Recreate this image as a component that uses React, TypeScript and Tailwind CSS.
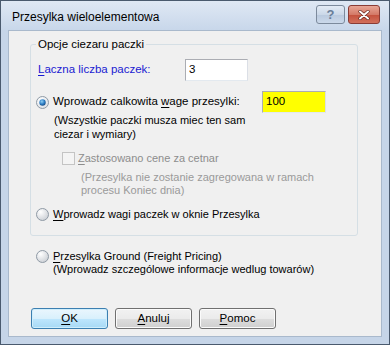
import React from 'react';

const font = "font-['Liberation_Sans',Arial,sans-serif]";

const Radio: React.FC<{ checked?: boolean }> = ({ checked }) => (
  <svg width="13" height="13" viewBox="0 0 13 13" className="shrink-0">
    <defs>
      <radialGradient id={checked ? 'rgOn' : 'rgOff'} cx="0.35" cy="0.3" r="0.8">
        <stop offset="0" stopColor="#ffffff" />
        <stop offset="1" stopColor={checked ? '#d9dee4' : '#c8ccd2'} />
      </radialGradient>
      <radialGradient id="dot" cx="0.4" cy="0.35" r="0.7">
        <stop offset="0" stopColor="#8fd0f5" />
        <stop offset="0.6" stopColor="#2a7bc2" />
        <stop offset="1" stopColor="#15467d" />
      </radialGradient>
    </defs>
    <circle cx="6.5" cy="6.5" r="6" fill={`url(#${checked ? 'rgOn' : 'rgOff'})`} stroke="#8f9aa5" strokeWidth="1" />
    {checked && <circle cx="6.5" cy="6.5" r="3.2" fill="url(#dot)" />}
  </svg>
);

const Checkbox: React.FC = () => (
  <span className="w-[13px] h-[13px] shrink-0 border border-[#c4c4c4] bg-[#f4f4f4]" />
);

const Button: React.FC<{ children: React.ReactNode; primary?: boolean }> = ({ children, primary }) => (
  <button
    className={`w-[77px] h-[21px] rounded-[3px] border text-[11.5px] leading-none text-black ${
      primary
        ? 'border-[#3c7fb1] bg-[linear-gradient(to_bottom,#eaf6fd_0%,#d9f0fc_50%,#bee6fd_51%,#a7d9f5_100%)] shadow-[inset_0_0_0_1px_#cfeefc]'
        : 'border-[#707070] bg-[linear-gradient(to_bottom,#f2f2f2_0%,#ebebeb_50%,#dddddd_51%,#cfcfcf_100%)] shadow-[inset_0_0_0_1px_#fbfbfb]'
    }`}
  >
    {children}
  </button>
);

export default function App() {
  return (
    <div className={`w-[390px] h-[345px] flex flex-col border border-[#4a5a6e] bg-[#c6d5e8] ${font} text-[11px] text-black overflow-hidden`}>
      {/* title bar */}
      <div className="h-[29px] flex items-center pl-[11px] pr-[9px] bg-[linear-gradient(to_bottom,#dfe8f4,#c8d7ea)]">
        <span className="flex-1 text-[12px] text-black pt-[2px]">Przesylka wieloelementowa</span>
        <div className="flex items-start gap-[3px] self-start mt-[4px]">
          <div className="w-[29px] h-[19px] rounded-[3px] border border-[#7c8a9c] bg-[linear-gradient(to_bottom,#e3ebf5_0%,#cbd8e8_50%,#b9c9de_51%,#cbd9ea_100%)] flex items-center justify-center">
            <span className="text-[13px] font-bold text-[#6a7e9a] leading-none">?</span>
          </div>
          <div className="w-[32px] h-[19px] rounded-[3px] border border-[#8a3c36] bg-[linear-gradient(to_bottom,#e8a696_0%,#d47a68_50%,#c4503c_51%,#d2705c_100%)] flex items-center justify-center">
            <svg width="12" height="10" viewBox="0 0 12 10">
              <path d="M2 1.5 L10 8.5 M10 1.5 L2 8.5" stroke="#5b1e16" strokeWidth="3.2" strokeLinecap="round" />
              <path d="M2 1.5 L10 8.5 M10 1.5 L2 8.5" stroke="#ffffff" strokeWidth="2" strokeLinecap="round" />
            </svg>
          </div>
        </div>
      </div>

      {/* client area */}
      <div className="flex-1 mx-[7px] mb-[7px] border border-[#a9b9cc] bg-[#f0f0f0] flex flex-col pt-[6px]">
        <fieldset className="ml-[21px] w-[328px] border border-[#d5dfe5] rounded-[3px] pb-[14px]">
          <legend className="ml-[5px] px-[2px] leading-[14px] text-[11.5px]">Opcje ciezaru paczki</legend>

          <div className="flex items-center h-[22px] mt-[8px] pl-[7px]">
            <span className="w-[147px] text-[#1a1ad2] text-[11.5px]">
              <u className="underline-offset-2">L</u>aczna liczba paczek:
            </span>
            <div className="w-[63px] h-[22px] border border-[#abadb3] border-b-[#e3e9ef] border-r-[#dbdfe6] bg-white px-[3px] flex items-center text-[11.5px]">
              3
            </div>
          </div>

          <div className="flex items-center h-[22px] mt-[10px] pl-[5px]">
            <Radio checked />
            <span className="ml-[4px] w-[209px] text-[11.5px]">
              Wprowadz calkowita <u className="underline-offset-2">w</u>age przesylki:
            </span>
            <div className="w-[64px] h-[22px] border border-[#abadb3] border-b-[#e3e9ef] border-r-[#dbdfe6] bg-[#ffff00] px-[3px] flex items-center text-[11.5px]">
              100
            </div>
          </div>

          <div className="pl-[23px] leading-[14px]">
            (Wszystkie paczki musza miec ten sam
            <br />
            ciezar i wymiary)
          </div>

          <div className="flex items-center h-[14px] mt-[10px] pl-[31px] text-[#8d8d8d]">
            <Checkbox />
            <span className="ml-[3px]">
              <u className="underline-offset-2">Z</u>astosowano cene za cetnar
            </span>
          </div>

          <div className="pl-[50px] leading-[13px] mt-[6px] text-[#9a9a9a]">
            (Przesylka nie zostanie zagregowana w ramach
            <br />
            procesu Koniec dnia)
          </div>

          <div className="flex items-center h-[14px] mt-[10px] pl-[5px]">
            <Radio />
            <span className="ml-[4px]">
              <u className="underline-offset-2">W</u>prowadz wagi paczek w oknie Przesylka
            </span>
          </div>
        </fieldset>

        <div className="flex items-start mt-[13px] ml-[27px]">
          <div className="h-[14px] flex items-center">
            <Radio />
          </div>
          <div className="ml-[4px] leading-[13px] mt-[1px]">
            <u className="underline-offset-2">P</u>rzesylka Ground (Freight Pricing)
            <br />
            (Wprowadz szczególowe informacje wedlug towarów)
          </div>
        </div>

        <div className="flex gap-[7px] mt-[32px] ml-[22px]">
          <Button primary>
            <u className="underline-offset-2">O</u>K
          </Button>
          <Button>
            <u className="underline-offset-2">A</u>nuluj
          </Button>
          <Button>
            <u className="underline-offset-2">P</u>omoc
          </Button>
        </div>
      </div>
    </div>
  );
}
